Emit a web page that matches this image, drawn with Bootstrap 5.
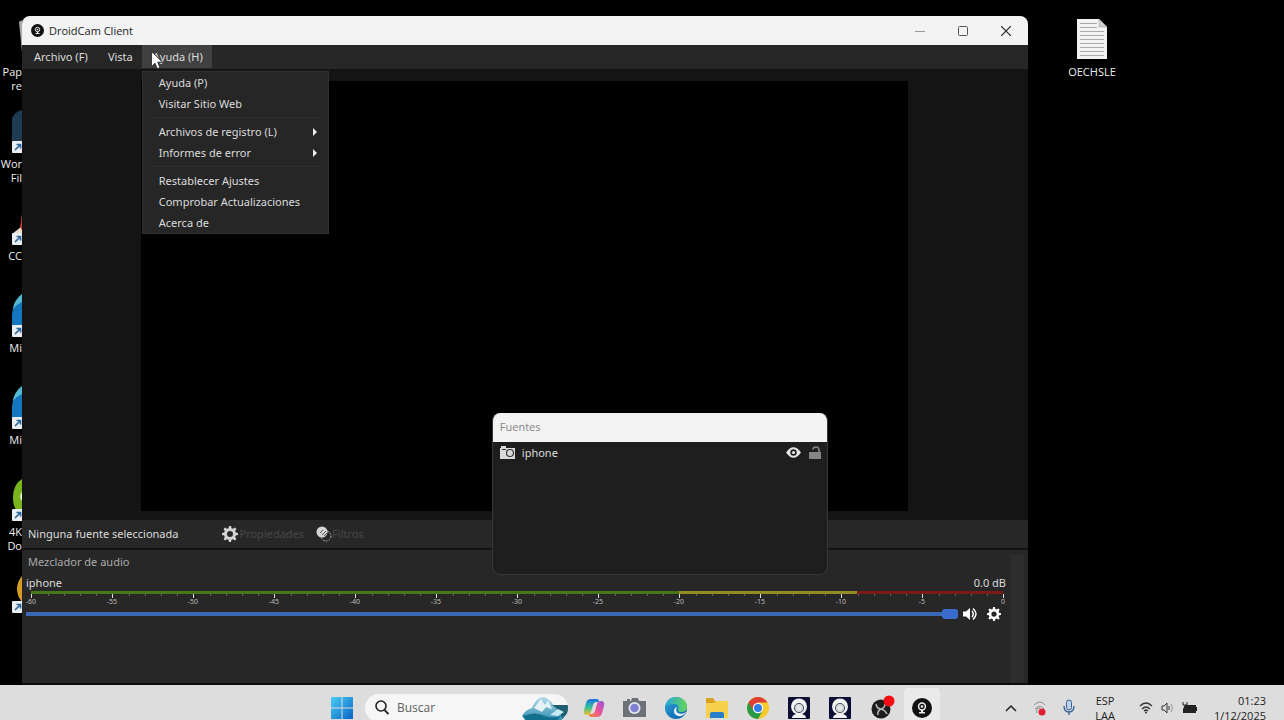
<!DOCTYPE html>
<html lang="es">
<head>
<meta charset="utf-8">
<meta name="viewport" content="width=device-width, initial-scale=1">
<title>DroidCam Client</title>
<link href="https://cdn.jsdelivr.net/npm/bootstrap@5.3.0/dist/css/bootstrap.min.css" rel="stylesheet">
<style>
  body { background: #000; color: #dcdcdc; font: 11px/16px "Noto Sans", "Open Sans", sans-serif; }
  button, input { font: inherit; color: inherit; }
  .plain-btn { background: none; border: 0; padding: 0; color: inherit; display: inline-flex; align-items: center; justify-content: center; }
  svg { display: block; flex: none; }

  /* desktop */
  .icons-left { width: 22px; padding-top: 18px; }
  .desk-item { height: 92px; width: 22px; font: 11px/14px "Open Sans", sans-serif; color: #eee; display: flex; flex-direction: column; align-items: flex-end; white-space: nowrap; overflow: hidden; }
  .desk-item svg { margin-bottom: 4px; }
  .icons-right { width: 256px; padding: 18px 0 0 28px; }
  .desk-file { width: 72px; font: 11px/16px "Open Sans", sans-serif; color: #eee; text-decoration: none; }

  /* main window */
  .app-window { margin-top: 16px; background: #272727; border-radius: 8px 8px 0 0; border-bottom: 2px solid #0c0c0c; }
  .title-strip { height: 29px; background: #f3f3f3; color: #222; border-radius: 8px 8px 0 0; padding: 0 1px 0 9px; font-family: "Open Sans", sans-serif; }
  .title-strip .plain-btn { width: 43px; height: 29px; }
  .title-text { margin-left: 5px; }
  .menu-strip { height: 24px; background: #262626; padding-left: 1px; }
  .menu-strip .plain-btn { height: 23px; padding: 0 9px 0 11px; }
  .menu-strip .plain-btn.open { background: #404040; }
  .help-menu { display: block; top: 26px; left: 0; width: 187px; min-width: 0; padding: 0; background: #262626; border: 1px solid #303030; border-radius: 0; font-size: 11px; }
  .help-menu .dropdown-item { color: #dcdcdc; height: 21px; padding: 0 11px 0 16px; line-height: 21px; }
  .help-menu .dropdown-divider { margin: 3px 8px; border-color: #303030; opacity: 1; }
  .pointer { top: 6px; left: 9px; z-index: 1100; }
  .stage { background: #141414; padding: 12px 120px 9px 119px; }
  .preview { background: #000; }
  .source-strip { height: 30px; background: #272727; border-bottom: 2px solid #121212; padding-left: 6px; }
  .source-strip .plain-btn:disabled { color: #484848; }
  .props-btn { margin-left: 44px; gap: 1px; }
  .mixer { height: 133px; }
  .mixer h2 { font-size: 11px; line-height: 16px; font-weight: 400; color: #aaa; margin: 0; padding: 4px 0 5px 2px; }
  .scroll-gutter { width: 14px; background: #2d2d2d; margin: 4px 4px 0 0; }
  .level { height: 3px; margin: 0 3px 0 5px; }
  .level .ok { width: 66.67%; background: #467818; }
  .level .warn { width: 18.33%; background: #928c25; }
  .level .peak { width: 15%; background: #7c1a17; }
  .scale { margin: 0 2px 0 5px; height: 13px; font-size: 7px; line-height: 7px; color: #bbb; }
  .tick-group { flex: 1 1 0; min-width: 0; border-left: 1px solid #ddd; height: 4px; display: grid; grid-template: 2px auto / repeat(5, 1fr); }
  .tick-group.last { flex: 0 0 1px; }
  .tick-group i { border-left: 1px solid #666; grid-row: 1; }
  .tick-group i:first-child { border: 0; }
  .tick-group span { width: 18px; margin: 2px 0 0 -10px; text-align: center; grid-row: 2; grid-column: 1; }
  .volume { -webkit-appearance: none; appearance: none; background: transparent; height: 10px; margin: 0; width: 100%; }
  .volume::-webkit-slider-runnable-track { height: 4px; background: #3c69b4; }
  .volume::-webkit-slider-thumb { -webkit-appearance: none; width: 16px; height: 10px; margin-top: -3px; border-radius: 3px; background: #3a6ccd; }
  .gear-btn { margin: 0 5px 0 9px; }

  /* floating panel */
  .sources { left: 46.7%; top: 397px; width: 336px; height: 162px; background: #1e1e1e; border: 1px solid #383838; border-top: 0; border-radius: 8px; overflow: hidden; }
  .sources header { height: 29px; background: #f3f3f3; color: #858585; padding: 6px 7px; font-family: "Open Sans", sans-serif; }
  .source-row { height: 21px; padding: 0 6px 0 7px; }
  .source-name { margin-left: 6px; }

  /* taskbar */
  .task-bar { height: 35px; background: #dddddd; color: #222; display: grid; grid-template-columns: 1fr auto 1fr; overflow: hidden; }
  .task-mid { padding-right: 21px; height: 45px; }
  .task-mid .plain-btn { width: 41px; height: 45px; }
  .task-mid .plain-btn.active { background: #eaeaea; width: 36px; height: 40px; border-radius: 4px; margin: 0 2px 0 3px; }
  .search-pill { width: 203px; height: 28px; background: #f6f6f6; border-radius: 14px; margin: 0 5px 0 3px; padding-left: 10px; overflow: hidden; }
  .search-pill input { border: 0; background: none; width: 110px; padding: 0; outline: 0; font-family: "Open Sans", sans-serif; font-size: 12px; }
  .search-pill input::placeholder { color: #606060; opacity: 1; }
  .tray { height: 45px; padding-right: 18px; font: 11px/15px "Open Sans", sans-serif; }
</style>
</head>
<body class="vh-100 overflow-hidden d-flex flex-column">

<svg width="0" height="0" class="position-absolute">
  <defs>
    <linearGradient id="edgeA" x1="0" y1="0" x2="1" y2="1"><stop offset="0" stop-color="#2aa6d8"/><stop offset="1" stop-color="#0a58a8"/></linearGradient>
    <linearGradient id="edgeB" x1="0" y1="0" x2="1" y2="0"><stop offset="0" stop-color="#28a8dc"/><stop offset="1" stop-color="#62d65a"/></linearGradient>
    <linearGradient id="win" x1="0" y1="0" x2="1" y2="1"><stop offset="0" stop-color="#4ccdf5"/><stop offset="1" stop-color="#0864c4"/></linearGradient>
    <linearGradient id="copA" x1="0" y1="0" x2="0" y2="1"><stop offset="0" stop-color="#1c6fe0"/><stop offset=".5" stop-color="#2fbfa0"/><stop offset="1" stop-color="#f3c320"/></linearGradient>
    <linearGradient id="copB" x1="1" y1="0" x2="0" y2="1"><stop offset="0" stop-color="#9a50e0"/><stop offset=".5" stop-color="#e8549c"/><stop offset="1" stop-color="#f58a30"/></linearGradient>
    <linearGradient id="ice" x1="0" y1="0" x2="0" y2="1"><stop offset="0" stop-color="#b8dcec"/><stop offset="1" stop-color="#2f8db0"/></linearGradient>
    <g id="link"><rect x="0" y="31" width="14" height="12" rx="1" fill="#e8eef2"/><path d="M3 40l5-5M4.500 34.500h4v4" stroke="#2b6796" stroke-width="1.600" fill="none"/></g>
    <path id="cog" fill-rule="evenodd" d="M7 0h2l.5 2.200 1.500.600L13 1.600 14.400 3l-1.200 2 .6 1.500L16 7v2l-2.200.500-.6 1.500 1.200 2-1.400 1.400-2-1.200-1.500.6L9 16H7l-.5-2.200-1.500-.6-2 1.200L1.600 13l1.200-2-.6-1.500L0 9V7l2.200-.5.6-1.500-1.200-2L3 1.600l2 1.200 1.500-.6zM8 5a3 3 0 1 0 0 6 3 3 0 0 0 0-6z"/>
    <g id="webcam"><rect width="22" height="22" rx="1" fill="#0d0e33"/><path d="M4 21q0-3 4-4h6q4 1 4 4z" fill="#f2f2f2"/><circle cx="11" cy="9.500" r="8" fill="#f2f2f2"/><circle cx="11" cy="11" r="4.600" fill="#d5d9dc" stroke="#4a4c5c"/><circle cx="11" cy="11" r="2.200" fill="#e6e9ea"/></g>
    <g id="droid"><circle cx="10" cy="10" r="10" fill="#111"/><circle cx="10" cy="8.500" r="3.400" fill="none" stroke="#eee" stroke-width="1.500"/><circle cx="10" cy="8.500" r="1.300" fill="#eee"/><path d="M9 12h2v2h2v1.500H7V14h2z" fill="#eee"/></g>
  </defs>
</svg>

<main class="d-flex flex-grow-1 overflow-hidden">
  <div class="icons-left flex-shrink-0">
    <div class="desk-item"><svg width="10" height="43"><path d="M7 4l3-2v32z" fill="#aaa9a5"/></svg><span>Pap</span><span>re</span></div>
    <div class="desk-item"><svg width="10" height="43"><path d="M0 32V9q2-7 10-9v43H0z" fill="#1d3c53"/><use href="#link"/></svg><span>Wor</span><span>Fil</span></div>
    <div class="desk-item"><svg width="10" height="43"><path d="M10 12v20H0l9-7z" fill="#e9dfcf"/><path d="M10 14v14l-2-3z" fill="#bf3b30"/><use href="#link"/></svg><span>CC</span></div>
    <div class="desk-item"><svg width="10" height="43"><path d="M10 0Q1 8 0 20v14h10z" fill="#1476be"/><path d="M10 0Q2 6 1 15q4-5 9-7z" fill="#53b9d3"/><use href="#link"/></svg><span>Mi</span></div>
    <div class="desk-item"><svg width="10" height="43"><path d="M10 0Q1 8 0 20v14h10z" fill="#1476be"/><path d="M10 0Q2 6 1 15q4-5 9-7z" fill="#53b9d3"/><use href="#link"/></svg><span>Mi</span></div>
    <div class="desk-item"><svg width="10" height="43"><path d="M10 1Q1 6 1 20t9 14z" fill="#78b51c"/><path d="M10 14q-4 4 0 9z" fill="#e5f2cf"/><use href="#link"/></svg><span>4K</span><span>Do</span></div>
    <div class="desk-item"><svg width="10" height="43"><path d="M10 6Q5 12 5 19t5 13z" fill="#d69c22"/><use href="#link"/></svg></div>
  </div>

  <section class="app-window position-relative flex-grow-1 d-flex flex-column">
    <header class="title-strip d-flex align-items-center flex-shrink-0">
      <svg width="13" height="13" viewBox="0 0 20 20"><use href="#droid"/></svg>
      <span class="title-text">DroidCam Client</span>
      <div class="ms-auto d-flex">
        <button class="plain-btn" aria-label="Minimizar"><svg width="10" height="10"><path d="M0 5.500h10" stroke="#999"/></svg></button>
        <button class="plain-btn" aria-label="Maximizar"><svg width="10" height="10"><rect x=".5" y=".5" width="9" height="9" rx="1" fill="none" stroke="#555"/></svg></button>
        <button class="plain-btn" aria-label="Cerrar"><svg width="10" height="10"><path d="M0 0l10 10M10 0L0 10" stroke="#222" stroke-width="1.200"/></svg></button>
      </div>
    </header>

    <nav class="menu-strip d-flex flex-shrink-0">
      <button class="plain-btn">Archivo (F)</button>
      <button class="plain-btn">Vista</button>
      <div class="position-relative">
        <button class="plain-btn open" aria-expanded="true">Ayuda (H)</button>
        <svg class="pointer position-absolute" width="12" height="19" viewBox="0 0 12 19"><path d="M.5.500v15l3.500-3.300 2.300 5.500 2.700-1.200-2.300-5.300h4.800z" fill="#fff" stroke="#222" stroke-width=".8"/></svg>
        <div class="dropdown-menu help-menu">
          <a class="dropdown-item" href="#">Ayuda (P)</a>
          <a class="dropdown-item" href="#">Visitar Sitio Web</a>
          <hr class="dropdown-divider">
          <a class="dropdown-item d-flex justify-content-between align-items-center" href="#">Archivos de registro (L)<svg width="4" height="8"><path d="M0 0l4 4-4 4z" fill="#eee"/></svg></a>
          <a class="dropdown-item d-flex justify-content-between align-items-center" href="#">Informes de error<svg width="4" height="8"><path d="M0 0l4 4-4 4z" fill="#eee"/></svg></a>
          <hr class="dropdown-divider">
          <a class="dropdown-item" href="#">Restablecer Ajustes</a>
          <a class="dropdown-item" href="#">Comprobar Actualizaciones</a>
          <a class="dropdown-item" href="#">Acerca de</a>
        </div>
      </div>
    </nav>

    <div class="stage flex-grow-1 d-flex"><div class="preview flex-grow-1"></div></div>

    <div class="source-strip d-flex align-items-center flex-shrink-0">
      <span>Ninguna fuente seleccionada</span>
      <button class="plain-btn props-btn" disabled><svg width="16" height="16" fill="#d4d4d4"><use href="#cog"/></svg>Propiedades</button>
      <button class="plain-btn ms-2 ps-1" disabled><svg width="16" height="16"><circle cx="10" cy="10" r="5" fill="none" stroke="#aaa" stroke-dasharray="2 1"/><circle cx="6" cy="6" r="5.500" fill="#d4d4d4"/><path d="M4 7l3-3M6 9l4-4M8 10l3-3" stroke="#555"/></svg>Filtros</button>
    </div>

    <section class="mixer d-flex flex-shrink-0">
      <div class="flex-grow-1 px-1">
        <h2>Mezclador de audio</h2>
        <div class="d-flex justify-content-between"><label for="vol">iphone</label><span>0.0 dB</span></div>
        <div class="level d-flex"><div class="ok"></div><div class="warn"></div><div class="peak"></div></div>
        <div class="scale d-flex" id="scale"></div>
        <div class="d-flex align-items-center">
          <input id="vol" class="volume" type="range" min="0" max="100" value="100">
          <button class="plain-btn ms-1" aria-label="Silenciar"><svg width="16" height="14"><path d="M1 4.500h3L8 1v12L4 9.500H1z" fill="#fff"/><path d="M10 4q2.500 3 0 6M11 1.500q6 5.500 0 11" stroke="#fff" stroke-width="1.500" fill="none"/></svg></button>
          <button class="plain-btn gear-btn" aria-label="Configurar"><svg width="14" height="14" viewBox="0 0 16 16" fill="#fff"><use href="#cog"/></svg></button>
        </div>
      </div>
      <div class="scroll-gutter"></div>
    </section>

    <aside class="sources position-absolute">
      <header>Fuentes</header>
      <div class="source-row d-flex align-items-center">
        <svg width="16" height="13"><path d="M0 2h1V0h5v2h9v11H0z" fill="#dadada"/><circle cx="10" cy="7" r="3.500" fill="#dadada" stroke="#333" stroke-width="1.200"/><path d="M2 3.500h4" stroke="#333"/></svg>
        <span class="source-name flex-grow-1">iphone</span>
        <button class="plain-btn me-2" aria-label="Mostrar"><svg width="15" height="11"><path d="M0 5.500Q7.500-5 15 5.500 7.500 16 0 5.500z" fill="#e6e6e6"/><circle cx="7.500" cy="5.500" r="3.200" fill="#222"/><circle cx="7.500" cy="5.500" r="1.600" fill="#e6e6e6"/></svg></button>
        <button class="plain-btn" aria-label="Bloquear"><svg width="12" height="13"><path d="M0 6h12v7H0z" fill="#858585"/><path d="M4 3.500q0-2.500 3-2.500t3 3v3" stroke="#858585" stroke-width="1.600" fill="none"/></svg></button>
      </div>
    </aside>
  </section>

  <div class="icons-right flex-shrink-0">
    <a href="#" class="desk-file d-flex flex-column align-items-center">
      <svg class="mb-1" width="32" height="42"><path d="M1 1h22l8 8v32H1z" fill="#f3f3f3"/><path d="M23 1v8h8z" fill="#cfcfcf" stroke="#999" stroke-width=".5"/><path d="M4 5.500h17M4 9.500h17M4 13.500h24M4 17.500h24M4 21.500h24M4 25.500h24M4 29.500h24M4 33.500h24M4 37.500h24" stroke="#aaa"/></svg>
      <span>OECHSLE</span>
    </a>
  </div>
</main>

<footer class="task-bar flex-shrink-0">
  <div></div>
  <div class="task-mid d-flex align-items-center">
    <button class="plain-btn" aria-label="Inicio"><svg width="22" height="22"><path d="M0 0h10.500v10.500H0zM11.500 0H22v10.500H11.500zM0 11.500h10.500V22H0zM11.500 11.500H22V22H11.500z" fill="url(#win)"/></svg></button>
    <div class="search-pill d-flex align-items-center">
      <svg width="14" height="15"><circle cx="6" cy="6" r="5" fill="none" stroke="#222" stroke-width="1.600"/><path d="M9.500 10l4 4" stroke="#222" stroke-width="1.800"/></svg>
      <input class="ms-2" type="text" placeholder="Buscar" aria-label="Buscar">
      <svg class="ms-auto" width="46" height="24"><path d="M0 20q4-7 10-8 5-12 12-11 6 2 10 9l14-1q1 8-6 15H3z" fill="url(#ice)"/><path d="M30 9h16v8l-6 5q-2-8-10-13z" fill="#1d5f70"/><path d="M12 12l7-9 4 6 3-5 4 9-6-2-4 5z" fill="#e4f2f8"/><path d="M1 20q12-5 22 0 8 3 16 0l-4 4H4z" fill="#12708f"/><path d="M28 19l8-6 6 3-6 4z" fill="#c6ebf3"/></svg>
    </div>
    <button class="plain-btn" aria-label="Copilot"><svg width="22" height="20"><path d="M8 1h6q2 0 2 3h-3q-2 0-3 3l-2 7q-1 3-4 3-4 0-3-5l2-7q1-4 5-4z" fill="url(#copA)"/><path d="M14 19H8q-2 0-2-3h3q2 0 3-3l2-7q1-3 4-3 4 0 3 5l-2 7q-1 4-5 4z" fill="url(#copB)"/></svg></button>
    <button class="plain-btn" aria-label="Cámara"><svg width="23" height="19"><path d="M0 3h4V1h3v2h1l1-3h6l1 3h7v16H0z" fill="#6d7278"/><circle cx="11.500" cy="10" r="6" fill="#e6e9ef"/><circle cx="11.500" cy="10" r="4.300" fill="#8180d5"/></svg></button>
    <button class="plain-btn" aria-label="Edge"><svg width="22" height="22"><circle cx="11" cy="11" r="11" fill="url(#edgeA)"/><path d="M0 10Q2 0 11 0q11 1 11 10 0 5-6 5-3 0-3-2 2-6-4-6Q2 7 0 10z" fill="url(#edgeB)"/><path d="M12 10q-2 4 1 6 4 2 8-1-3 5-8 4-5-2-4-6 1-3 3-3z" fill="#dff0f3"/></svg></button>
    <button class="plain-btn" aria-label="Explorador"><svg width="22" height="20"><path d="M0 0h7l2 3h13v17H0z" fill="#d9a520"/><path d="M0 5h8l2-2h12v17H0z" fill="#f8d14c"/><path d="M4 20v-4q0-2 2-2h10q2 0 2 2v4z" fill="#2580c9"/></svg></button>
    <button class="plain-btn" aria-label="Chrome"><svg width="22" height="22"><circle cx="11" cy="11" r="11" fill="#f7c92b"/><path d="M11 11L1.500 5.500A11 11 0 0 0 11 22l4.500-8z" fill="#299a49"/><path d="M1.500 5.500a11 11 0 0 1 19 0H11v5.500L6 13z" fill="#df3f32"/><circle cx="11" cy="11" r="5.200" fill="#fff"/><circle cx="11" cy="11" r="4" fill="#327be8"/></svg></button>
    <button class="plain-btn" aria-label="Cámara web 1"><svg width="22" height="22"><use href="#webcam"/></svg></button>
    <button class="plain-btn" aria-label="Cámara web 2"><svg width="22" height="22"><use href="#webcam"/></svg></button>
    <button class="plain-btn" aria-label="OBS"><svg class="ms-1" width="24" height="26"><circle cx="10" cy="14" r="9.500" fill="#1d1d1d"/><path d="M5 9q1 5 5 5 4-1 4-5M10 14q-4 2-3 6M10 14q4 1 6 5" stroke="#b5b5b5" stroke-width="1.500" fill="none"/><circle cx="18" cy="6" r="5.500" fill="#f40d12"/></svg></button>
    <button class="plain-btn active" aria-label="DroidCam"><svg width="20" height="20"><use href="#droid"/></svg></button>
  </div>
  <div class="tray d-flex align-items-center justify-content-end">
    <button class="plain-btn" aria-label="Iconos ocultos"><svg width="12" height="8"><path d="M1 7l5-5 5 5" stroke="#222" stroke-width="1.500" fill="none"/></svg></button>
    <svg class="ms-3" width="14" height="16"><path d="M1 5q6-6 11 0M2 9q5-5 9 0M4 13q-2-5 3-5" stroke="#8d8d8d" fill="none"/><circle cx="9" cy="12" r="3.500" fill="#dc1f32"/></svg>
    <svg class="ms-3" width="12" height="17"><rect x="3.500" y="1" width="5" height="10" rx="2.500" fill="#bcd1e8" stroke="#335f98"/><path d="M1 7q0 6 5 6t5-6M6 13v3" stroke="#335f98" stroke-width="1.300" fill="none"/></svg>
    <div class="text-center ms-3 ps-1">ESP<br>LAA</div>
    <svg class="ms-4" width="14" height="12"><path d="M1 4q6-6 12 0M3 7q4-4 8 0M5 9q2-2 4 0" stroke="#333" stroke-width="1.200" fill="none"/><circle cx="7" cy="10.500" r="1" fill="#333"/></svg>
    <svg class="ms-2" width="13" height="12"><path d="M1 4h2l3-3v10L3 8H1z" fill="none" stroke="#333"/><path d="M8 4v4" stroke="#333"/><path d="M10 2q3 4 0 8" stroke="#999" fill="none"/></svg>
    <svg class="ms-2 me-3" width="16" height="14"><path d="M3 4h11v8H1V8z" fill="#222"/><path d="M14.500 6v4" stroke="#222"/><path d="M1 1v3h4V1M3 4v4" stroke="#222" fill="none"/></svg>
    <div class="text-end">01:23<br>1/12/2025</div>
  </div>
</footer>

<script>
  // one tick group per 5 dB, from -60 up to 0
  const scale = document.getElementById('scale');
  for (let db = -60; db <= 0; db += 5) {
    const g = document.createElement('div');
    g.className = 'tick-group' + (db === 0 ? ' last' : '');
    g.innerHTML = (db === 0 ? '' : '<i></i>'.repeat(5)) + '<span>' + db + '</span>';
    scale.append(g);
  }
</script>
<script src="https://cdn.jsdelivr.net/npm/bootstrap@5.3.0/dist/js/bootstrap.bundle.min.js"></script>
</body>
</html>
